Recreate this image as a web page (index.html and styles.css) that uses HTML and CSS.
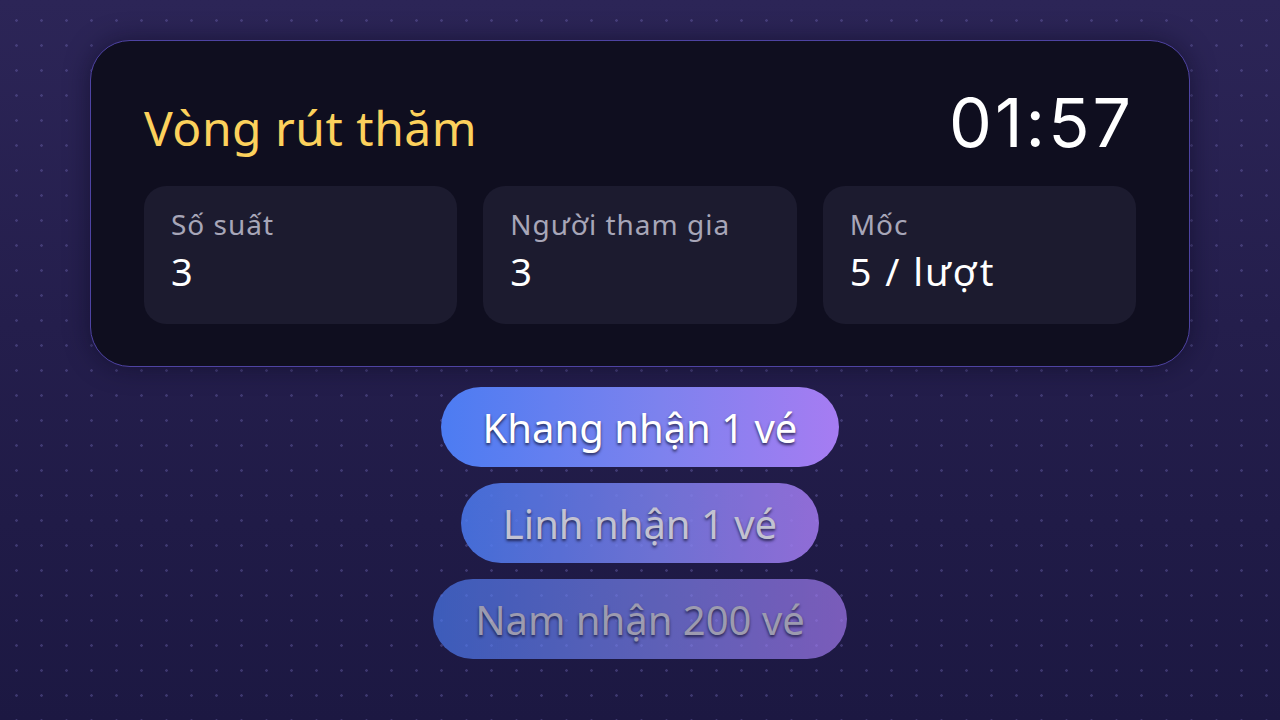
FILE: index.html
```html
<!DOCTYPE html>
<html lang="vi">
<head>
<meta charset="utf-8">
<link rel="stylesheet" href="styles.css">
</head>
<body>
<main class="stage">
  <section class="panel">
    <header class="panel-head">
      <h1 class="title">Vòng rút thăm</h1>
      <div class="timer">01:57</div>
    </header>
    <div class="stats">
      <div class="stat">
        <div class="stat-label">Số suất</div>
        <div class="stat-value">3</div>
      </div>
      <div class="stat">
        <div class="stat-label">Người tham gia</div>
        <div class="stat-value">3</div>
      </div>
      <div class="stat">
        <div class="stat-label">Mốc</div>
        <div class="stat-value">5 / lượt</div>
      </div>
    </div>
  </section>
  <div class="feed">
    <div class="toast t1">Khang nhận 1 vé</div>
    <div class="toast t2">Linh nhận 1 vé</div>
    <div class="toast t3">Nam nhận 200 vé</div>
  </div>
</main>
</body>
</html>
```
FILE: styles.css
```css
* { box-sizing: border-box; }
html, body { margin: 0; padding: 0; }
body {
  width: 1280px;
  height: 720px;
  overflow: hidden;
  font-family: "Noto Sans", "DejaVu Sans", sans-serif;
  background-color: #211c48;
  background-image:
    radial-gradient(circle, rgba(120,110,190,0.35) 1px, transparent 1.6px),
    linear-gradient(180deg, #2c2557 0%, #241e4c 45%, #1c1842 100%);
  background-size: 25px 25px, 100% 100%;
  background-position: 4px 8px, 0 0;
}
.stage {
  display: flex;
  flex-direction: column;
  align-items: center;
  padding-top: 40px;
}
.panel {
  width: 1100px;
  height: 327px;
  background: #0f0e1f;
  border: 1.5px solid #4e43a2;
  border-radius: 40px;
  padding: 52px 53px 0 53px;
  box-shadow: 0 0 24px rgba(10,8,30,0.5);
}
.panel-head {
  display: flex;
  justify-content: space-between;
  align-items: flex-start;
  height: 80px;
  margin-bottom: 13px;
}
.title {
  margin: 2px 0 0 0;
  font-size: 48px;
  font-weight: 400;
  letter-spacing: 0.5px;
  color: #fcd15c;
  line-height: 1.362;
}
.timer {
  font-family: "Inter", "Noto Sans", sans-serif;
  font-size: 68px;
  font-weight: 400;
  line-height: 1.21;
  color: #ffffff;
  letter-spacing: 3px;
  margin: -12px 2px 0 0;
}
.stats {
  display: grid;
  grid-template-columns: repeat(3, 1fr);
  gap: 26px;
}
.stat {
  height: 138px;
  background: #1c1b2f;
  border-radius: 22px;
  padding: 19px 27px 0;
}
.stat-label {
  font-size: 28px;
  letter-spacing: 1px;
  color: #a7a6b8;
  line-height: 38px;
}
.stat-value {
  font-size: 38px;
  letter-spacing: 2px;
  color: #ffffff;
  line-height: 48px;
  margin-top: 4px;
}
.feed {
  display: flex;
  flex-direction: column;
  align-items: center;
  gap: 16px;
  margin-top: 20px;
}
.toast {
  height: 80px;
  padding: 0 42px;
  border-radius: 40px;
  display: flex;
  align-items: center;
  font-size: 40px;
  color: #ffffff;
  background: linear-gradient(90deg, #4c7cf2 0%, #7d82ee 55%, #a67cf2 100%);
  text-shadow: 0 2px 3px rgba(20,20,50,0.8);
}
.t2 {
  opacity: 0.84;
  color: #e2e2ec;
}
.t3 {
  opacity: 0.68;
  color: #d8d8e2;
}
```
